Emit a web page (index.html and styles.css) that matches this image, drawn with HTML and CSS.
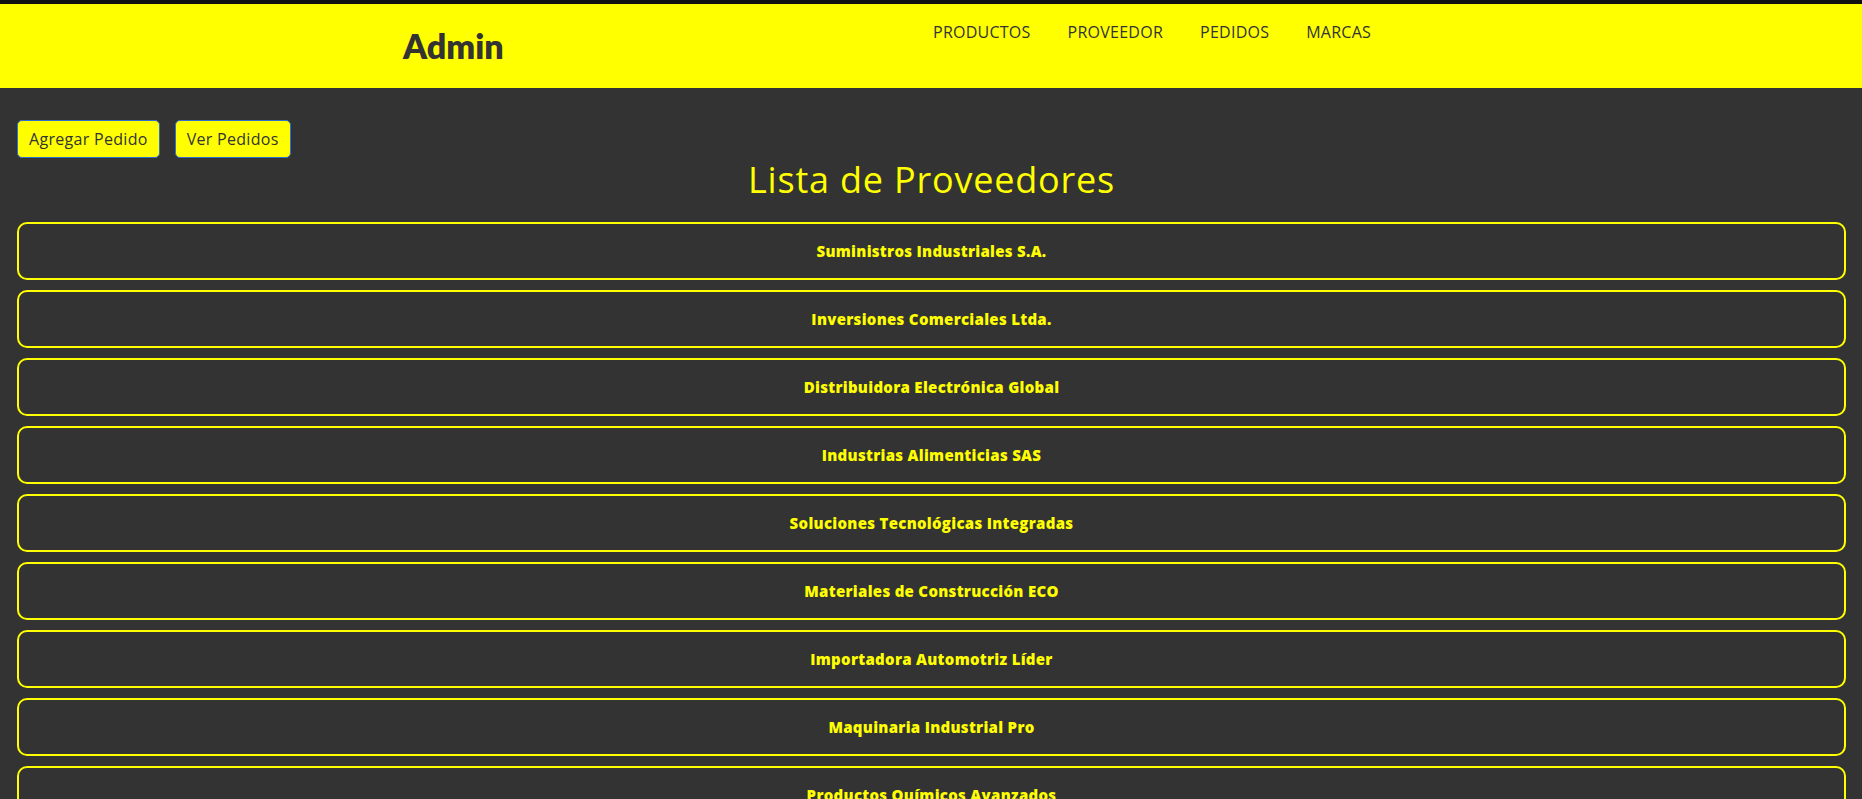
FILE: index.html
```html
<!DOCTYPE html>
<html lang="es">
<head>
<meta charset="utf-8">
<title>Admin - Proveedores</title>
<link rel="stylesheet" href="styles.css">
</head>
<body>
<header class="topbar">
  <div class="brand">Admin</div>
  <nav class="menu">
    <a class="menu-link" href="#">PRODUCTOS</a>
    <a class="menu-link" href="#">PROVEEDOR</a>
    <a class="menu-link" href="#">PEDIDOS</a>
    <a class="menu-link" href="#">MARCAS</a>
  </nav>
</header>
<main class="content">
  <div class="actions">
    <button class="btn">Agregar Pedido</button>
    <button class="btn">Ver Pedidos</button>
  </div>
  <h1 class="title">Lista de Proveedores</h1>
  <ul class="list">
    <li class="item">Suministros Industriales S.A.</li>
    <li class="item">Inversiones Comerciales Ltda.</li>
    <li class="item">Distribuidora Electrónica Global</li>
    <li class="item">Industrias Alimenticias SAS</li>
    <li class="item">Soluciones Tecnológicas Integradas</li>
    <li class="item">Materiales de Construcción ECO</li>
    <li class="item">Importadora Automotriz Líder</li>
    <li class="item">Maquinaria Industrial Pro</li>
    <li class="item">Productos Químicos Avanzados</li>
  </ul>
</main>
</body>
</html>
```
FILE: styles.css
```css
* { box-sizing: border-box; }

html, body {
  margin: 0;
  padding: 0;
  background: #333333;
  font-family: "Open Sans", "Liberation Sans", sans-serif;
}

.topbar {
  display: grid;
  grid-template-columns: 530px auto;
  align-items: center;
  height: 88px;
  padding-left: 403px;
  background: #ffff00;
  border-top: 4px solid #111111;
}

.brand {
  font-family: "Lato", "DejaVu Sans", sans-serif;
  font-weight: 800;
  font-size: 34px;
  line-height: 40px;
  color: #333333;
}

.menu {
  align-self: start;
  display: flex;
  gap: 37px;
  padding-top: 18px;
}

.menu-link {
  font-size: 16px;
  line-height: 20px;
  color: #333333;
  text-decoration: none;
  letter-spacing: 0.25px;
}

.content {
  padding: 32px 16px 0 17px;
}

.actions {
  display: flex;
  gap: 15px;
}

.btn {
  height: 38px;
  padding: 0 11px;
  background: #ffff00;
  color: #333333;
  border: 1px solid #2f6fd0;
  border-radius: 5px;
  font-family: "Open Sans", "Liberation Sans", sans-serif;
  font-size: 16px;
  line-height: 20px;
  letter-spacing: 0.3px;
}

.title {
  margin: 0 0 20px;
  text-align: center;
  font-weight: 400;
  font-size: 36px;
  line-height: 44px;
  letter-spacing: 0.8px;
  color: #ffff00;
}

.list {
  list-style: none;
  margin: 0;
  padding: 0;
  display: flex;
  flex-direction: column;
  gap: 10px;
}

.item {
  height: 58px;
  display: flex;
  align-items: center;
  justify-content: center;
  border: 2px solid #ffff00;
  border-radius: 10px;
  color: #ffff00;
  font-weight: 800;
  font-size: 15px;
  letter-spacing: 0.3px;
}
```
